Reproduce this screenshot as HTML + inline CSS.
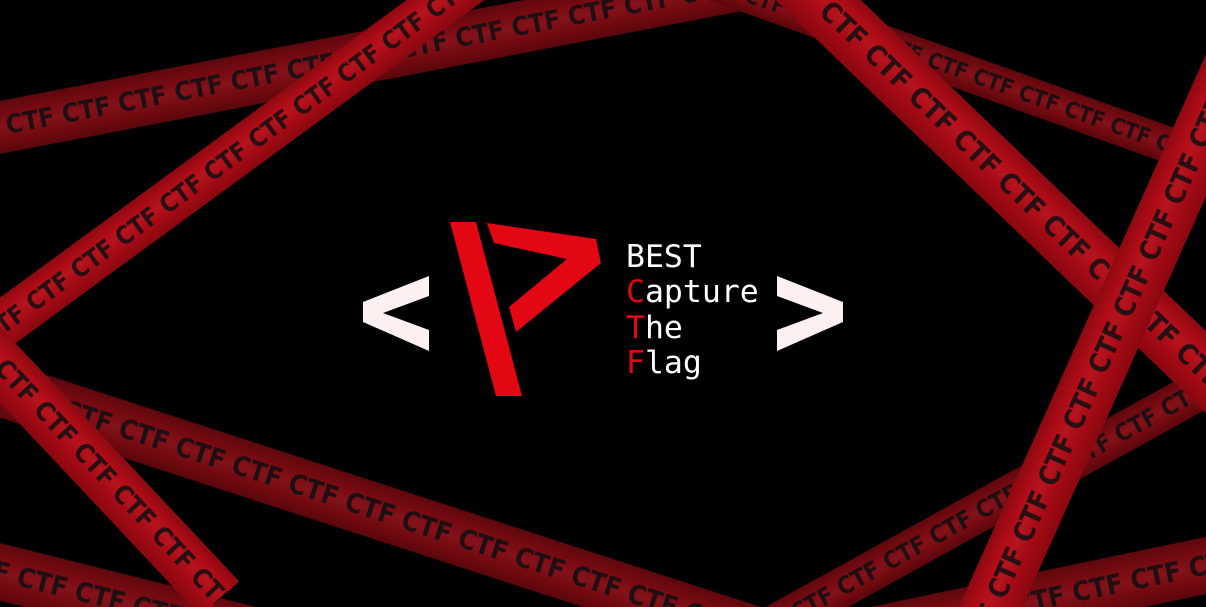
<!DOCTYPE html>
<html><head><meta charset="utf-8"><style>
html,body{margin:0;padding:0;background:#000;width:1206px;height:607px;overflow:hidden;}
#s{position:relative;width:1206px;height:607px;overflow:hidden;background:#000;}
.t{position:absolute;transform-origin:0 50%;display:flex;align-items:center;white-space:nowrap;overflow:hidden;
font-family:"DejaVu Sans Condensed","DejaVu Sans","Liberation Sans",sans-serif;font-weight:bold;color:rgba(15,15,18,0.85);letter-spacing:0px;}
.b{background:linear-gradient(180deg,#8e0911 0%,#ae0c16 25%,#b5141d 45%,#a30a14 70%,#8a0810 100%);}
.d{background:linear-gradient(180deg,#5e080d 0%,#7a0b12 30%,#84121a 50%,#720a10 75%,#5a070c 100%);}
.l{position:absolute;left:626px;font-family:"DejaVu Sans Mono","Liberation Mono",monospace;font-size:31.5px;color:#fff;line-height:1;}
.r{color:#e30613;}
</style></head><body><div id="s">

<div class="t d" style="left:-50px;top:111px;width:900px;height:52px;transform:rotate(-10.9deg);font-size:26px;">CTF CTF CTF CTF CTF CTF CTF CTF CTF CTF CTF CTF CTF CTF CTF CTF CTF</div>
<div class="t d" style="left:700px;top:-40px;width:600px;height:36px;transform:rotate(19.6deg);font-size:22px;">CTF CTF CTF CTF CTF CTF CTF CTF CTF CTF CTF CTF</div>
<div class="t d" style="left:-50px;top:345px;width:900px;height:55px;transform:rotate(18deg);font-size:27px;">CTF CTF CTF CTF CTF CTF CTF CTF CTF CTF CTF CTF CTF CTF CTF CTF CTF</div>
<div class="t d" style="left:-40px;top:534px;width:400px;height:56px;transform:rotate(14deg);font-size:27px;">CTF CTF CTF CTF CTF CTF CTF CTF</div>
<div class="t d" style="left:700px;top:646px;width:650px;height:40px;transform:rotate(-28.9deg);font-size:24px;">CTF CTF CTF CTF CTF CTF CTF CTF CTF CTF CTF CTF</div>
<div class="t d" style="left:840px;top:614px;width:450px;height:56px;transform:rotate(-11.8deg);font-size:27px;">CTF CTF CTF CTF CTF CTF CTF CTF CTF</div>

<div class="t b" style="left:-60px;top:347px;width:700px;height:46px;transform:rotate(-36.2deg);font-size:25px;">CTF CTF CTF CTF CTF CTF CTF CTF CTF CTF CTF CTF CTF CTF</div>
<div class="t b" style="left:780px;top:-66px;width:650px;height:59px;transform:rotate(43.8deg);font-size:28px;">CTF CTF CTF CTF CTF CTF CTF CTF CTF CTF CTF CTF</div>
<div class="t b" style="left:-40px;top:296px;width:380px;height:52px;transform:rotate(46.8deg);font-size:26px;">CTF CTF CTF CTF CTF CTF CTF CTF</div>
<div class="t b" style="left:970px;top:624px;width:700px;height:58px;transform:rotate(-65.9deg);font-size:28px;">CTF CTF CTF CTF CTF CTF CTF CTF CTF CTF CTF CTF CTF</div>

<svg style="position:absolute;left:0;top:0" width="1206" height="607">
<polygon fill="#fdf0f0" points="429,276 363,302 363,322 429,351 429,330 383,313 429,296"/>
<polygon fill="#fdf0f0" points="777,276 843,302 843,322 777,351 777,330 823,313 777,296"/>
<polygon fill="#e30613" points="450,222 476,222 522,396 496,396"/>
<polygon fill="#e30613" points="487,223 596,239 601,263 516,332 509,307 567,259 494,243"/>
</svg>

<div class="l" style="top:242px">BEST</div>
<div class="l" style="top:277px"><span class="r">C</span>apture</div>
<div class="l" style="top:313px"><span class="r">T</span>he</div>
<div class="l" style="top:348px"><span class="r">F</span>lag</div>
</div></body></html>
